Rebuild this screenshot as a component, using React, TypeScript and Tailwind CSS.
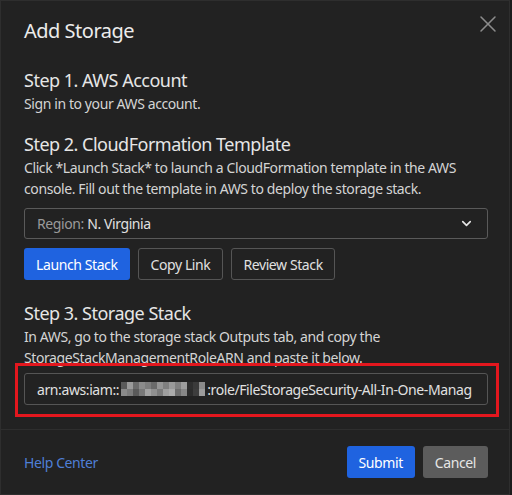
import { ChevronDown, X } from 'lucide-react'

const font = { fontFamily: '"Noto Sans", "Open Sans", sans-serif' }

// masked account id, drawn as a mosaic of grey cells
const mask = [
  ['#5a5a5a', '#8a8a8a'],
  ['#9a9a9a', '#7c7c7c'],
  ['#6b6b6b', '#5a5a5a'],
  ['#8b8b8b', '#787878'],
  ['#7d7d7d', '#a2a2a2'],
  ['#6a6a6a', '#8f8f8f'],
  ['#959595', '#7a7a7a'],
  ['#7f7f7f', '#9e9e9e'],
  ['#999999', '#aaaaaa'],
  ['#808080', '#6d6d6d'],
  ['#9e9e9e', '#878787'],
  ['#2e2e2e', '#2c2c2c'],
  ['#3a3a3a', '#3d3d3d'],
  ['#8a8a8a', '#9b9b9b'],
]

function Step({ title, children }: { title: string; children: React.ReactNode }) {
  return (
    <div className="flex flex-col">
      <h2 className="text-[18px] leading-[26px] tracking-[-0.5px] text-[#e6e6e6]">{title}</h2>
      <p className="text-[14px] leading-[21px] tracking-[-0.4px] text-[#d4d4d4]">{children}</p>
    </div>
  )
}

export default function App() {
  return (
    <div className="w-[512px] h-[495px] bg-[#1b1b1b]" style={font}>
      <div className="w-[510px] h-[495px] bg-[#222222] border border-[#2e2e2e] flex flex-col">
        <div className="flex items-start justify-between pl-[23px] pr-[7px] pt-[16px]">
          <h1 className="text-[20px] leading-[28px] tracking-[-0.5px] text-[#ececec]">Add Storage</h1>
          <X className="w-[28px] h-[28px] mt-[-7px] text-[#8c8c8c]" strokeWidth={1.3} />
        </div>

        <div className="flex flex-col pl-[23px] pr-[21px] pt-[22px]">
          <Step title="Step 1. AWS Account">Sign in to your AWS account.</Step>

          <div className="mt-[17px]">
            <Step title="Step 2. CloudFormation Template">
              Click *Launch Stack* to launch a CloudFormation template in the AWS console. Fill out the
              template in AWS to deploy the storage stack.
            </Step>
          </div>

          <div className="mt-[9px] h-[31px] rounded-[3px] border border-[#5a5a5a] flex items-center justify-between pl-[12px] pr-[13px] text-[14px] tracking-[-0.4px]">
            <span>
              <span className="text-[#9a9a9a]">Region: </span>
              <span className="text-[#e0e0e0]">N. Virginia</span>
            </span>
            <ChevronDown className="w-[15px] h-[15px] text-[#e6e6e6]" strokeWidth={2.6} />
          </div>

          <div className="mt-[9px] flex gap-[8px] text-[14px] tracking-[-0.4px]">
            <button className="h-[32px] px-[12px] rounded-[3px] bg-[#1f63e0] text-white">Launch Stack</button>
            <button className="h-[32px] px-[12px] rounded-[3px] border border-[#555555] text-[#e0e0e0]">
              Copy Link
            </button>
            <button className="h-[32px] px-[11px] rounded-[3px] border border-[#555555] text-[#e0e0e0]">
              Review Stack
            </button>
          </div>

          <div className="mt-[20px]">
            <Step title="Step 3. Storage Stack">
              In AWS, go to the storage stack Outputs tab, and copy the StorageStackManagementRoleARN and
              paste it below.
            </Step>
          </div>
        </div>

        <div className="ml-[14px] mr-[10px] mt-[-5px] border-[3px] border-[#e3171e] pl-[6px] pr-[8px] pt-[7px] pb-[9px]">
          <div className="h-[32px] rounded-[3px] border border-[#555555] flex items-center pl-[12px] text-[14px] tracking-[-0.4px] text-[#e0e0e0] overflow-hidden whitespace-nowrap">
            <span>arn:aws:iam::</span>
            <span className="flex mx-[2px]">
              {mask.map((c, i) => (
                <span key={i} className="flex flex-col">
                  <span className="w-[6px] h-[7px]" style={{ background: c[0] }} />
                  <span className="w-[6px] h-[7px]" style={{ background: c[1] }} />
                </span>
              ))}
            </span>
            <span>:role/FileStorageSecurity-All-In-One-Manag</span>
          </div>
        </div>

        <div className="mt-[12px] border-t border-[#2e2e2e] flex items-center justify-between pl-[23px] pr-[21px] pt-[16px]">
          <a className="text-[14px] tracking-[-0.4px] text-[#4f7fd6]">Help Center</a>
          <div className="flex gap-[8px] text-[14px] tracking-[-0.4px]">
            <button className="h-[32px] px-[12px] rounded-[3px] bg-[#1f63e0] text-white">Submit</button>
            <button className="h-[32px] px-[12px] rounded-[3px] bg-[#5c5c5c] text-[#e6e6e6]">Cancel</button>
          </div>
        </div>
      </div>
    </div>
  )
}
